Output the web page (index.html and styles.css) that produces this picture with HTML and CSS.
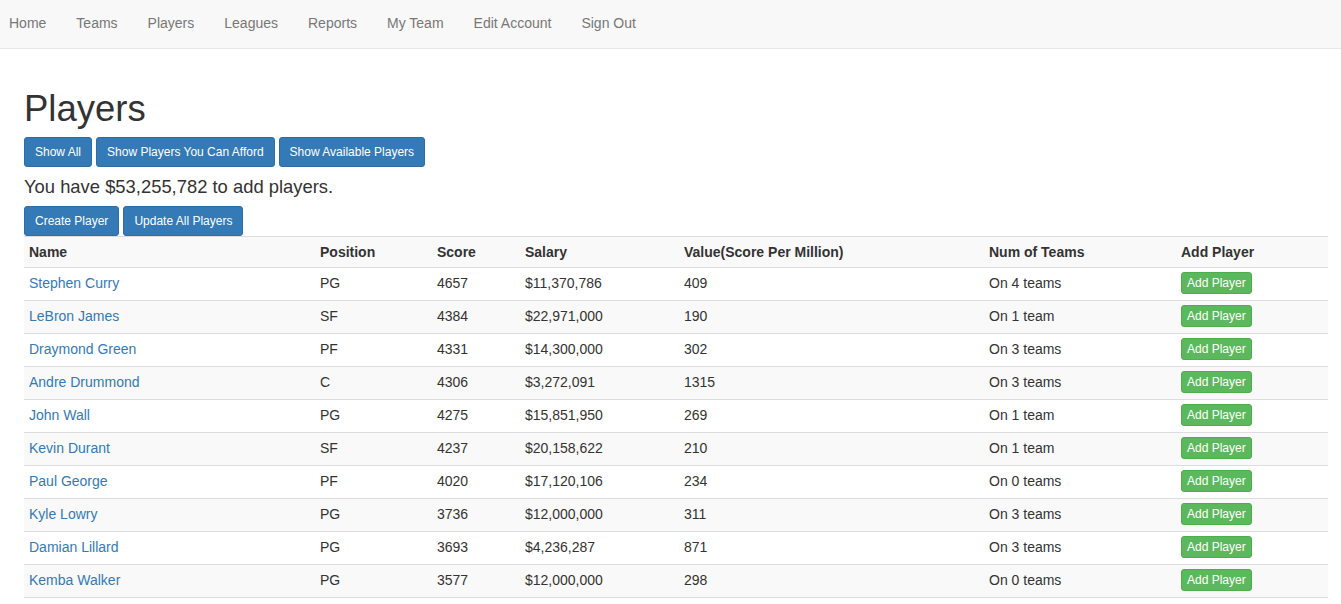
FILE: index.html
```html
<!DOCTYPE html>
<html>
<head>
<meta charset="utf-8">
<title>Players</title>
<link rel="stylesheet" href="styles.css">
</head>
<body>
<nav class="navbar">
  <ul class="nav-links">
    <li><a href="#">Home</a></li>
    <li><a href="#">Teams</a></li>
    <li><a href="#">Players</a></li>
    <li><a href="#">Leagues</a></li>
    <li><a href="#">Reports</a></li>
    <li><a href="#">My Team</a></li>
    <li><a href="#">Edit Account</a></li>
    <li><a href="#">Sign Out</a></li>
  </ul>
</nav>
<main class="content">
  <h1 class="title">Players</h1>
  <div class="btn-row">
    <a class="btn btn-primary btn-sm" href="#">Show All</a>
    <a class="btn btn-primary btn-sm" href="#">Show Players You Can Afford</a>
    <a class="btn btn-primary btn-sm" href="#">Show Available Players</a>
  </div>
  <h4 class="budget">You have $53,255,782 to add players.</h4>
  <div class="btn-row">
    <a class="btn btn-primary btn-sm" href="#">Create Player</a>
    <a class="btn btn-primary btn-sm" href="#">Update All Players</a>
  </div>
  <table class="players">
    <colgroup>
      <col class="c-name"><col class="c-pos"><col class="c-score"><col class="c-salary"><col class="c-value"><col class="c-teams"><col class="c-add">
    </colgroup>
    <tbody>
      <tr><th>Name</th><th>Position</th><th>Score</th><th>Salary</th><th>Value(Score Per Million)</th><th>Num of Teams</th><th>Add Player</th></tr>
      <tr><td><a href="#">Stephen Curry</a></td><td>PG</td><td>4657</td><td>$11,370,786</td><td>409</td><td>On 4 teams</td><td><a class="btn btn-success btn-xs" href="#">Add Player</a></td></tr>
      <tr><td><a href="#">LeBron James</a></td><td>SF</td><td>4384</td><td>$22,971,000</td><td>190</td><td>On 1 team</td><td><a class="btn btn-success btn-xs" href="#">Add Player</a></td></tr>
      <tr><td><a href="#">Draymond Green</a></td><td>PF</td><td>4331</td><td>$14,300,000</td><td>302</td><td>On 3 teams</td><td><a class="btn btn-success btn-xs" href="#">Add Player</a></td></tr>
      <tr><td><a href="#">Andre Drummond</a></td><td>C</td><td>4306</td><td>$3,272,091</td><td>1315</td><td>On 3 teams</td><td><a class="btn btn-success btn-xs" href="#">Add Player</a></td></tr>
      <tr><td><a href="#">John Wall</a></td><td>PG</td><td>4275</td><td>$15,851,950</td><td>269</td><td>On 1 team</td><td><a class="btn btn-success btn-xs" href="#">Add Player</a></td></tr>
      <tr><td><a href="#">Kevin Durant</a></td><td>SF</td><td>4237</td><td>$20,158,622</td><td>210</td><td>On 1 team</td><td><a class="btn btn-success btn-xs" href="#">Add Player</a></td></tr>
      <tr><td><a href="#">Paul George</a></td><td>PF</td><td>4020</td><td>$17,120,106</td><td>234</td><td>On 0 teams</td><td><a class="btn btn-success btn-xs" href="#">Add Player</a></td></tr>
      <tr><td><a href="#">Kyle Lowry</a></td><td>PG</td><td>3736</td><td>$12,000,000</td><td>311</td><td>On 3 teams</td><td><a class="btn btn-success btn-xs" href="#">Add Player</a></td></tr>
      <tr><td><a href="#">Damian Lillard</a></td><td>PG</td><td>3693</td><td>$4,236,287</td><td>871</td><td>On 3 teams</td><td><a class="btn btn-success btn-xs" href="#">Add Player</a></td></tr>
      <tr><td><a href="#">Kemba Walker</a></td><td>PG</td><td>3577</td><td>$12,000,000</td><td>298</td><td>On 0 teams</td><td><a class="btn btn-success btn-xs" href="#">Add Player</a></td></tr>
    </tbody>
  </table>
</main>
</body>
</html>
```

FILE: styles.css
```css
* { box-sizing: border-box; }
html, body { margin: 0; padding: 0; }
body {
  font-family: "Liberation Sans", Arial, Helvetica, sans-serif;
  font-size: 14px;
  line-height: 1.42857;
  color: #333;
  background: #fff;
}
a { color: #337ab7; text-decoration: none; }

.navbar {
  height: 49px;
  background: #f8f8f8;
  border-bottom: 1px solid #e7e7e7;
}
.nav-links {
  list-style: none;
  margin: 0 0 0 -6px;
  padding: 0;
  display: flex;
}
.nav-links a {
  display: block;
  padding: 0 15px;
  line-height: 46px;
  color: #777;
}

.content {
  padding: 0 13px 0 24px;
}
.title {
  font-size: 36.5px;
  font-weight: 500;
  line-height: 1.1;
  margin: 40px 0 8px;
}
.btn-row {
  display: flex;
  gap: 4px;
}
.btn {
  display: inline-block;
  border: 1px solid transparent;
  border-radius: 3px;
  color: #fff;
  white-space: nowrap;
}
.btn-sm {
  font-size: 12px;
  line-height: 18px;
  padding: 5px 10px;
}
.btn-xs {
  font-size: 12px;
  line-height: 18px;
  padding: 1px 5px;
}
.btn-primary { background: #337ab7; border-color: #2e6da4; }
.btn-success { background: #5cb85c; border-color: #4cae4c; }

.budget {
  font-size: 18.4px;
  font-weight: 500;
  line-height: 20px;
  margin: 10px 0 9px;
}

.players {
  width: 100%;
  border-collapse: collapse;
  border-spacing: 0;
  table-layout: fixed;
}
.c-name { width: 291px; }
.c-pos { width: 117px; }
.c-score { width: 88px; }
.c-salary { width: 159px; }
.c-value { width: 305px; }
.c-teams { width: 192px; }
.c-add { width: auto; }
.players th, .players td {
  padding: 4px 5px 6px;
  line-height: 20px;
  text-align: left;
  vertical-align: middle;
  border-top: 1px solid #ddd;
}
.players th { padding: 5px; font-weight: bold; }
.players tr:last-child td { border-bottom: 1px solid #ddd; }
.players tr:nth-child(odd) { background: #f9f9f9; }
```
